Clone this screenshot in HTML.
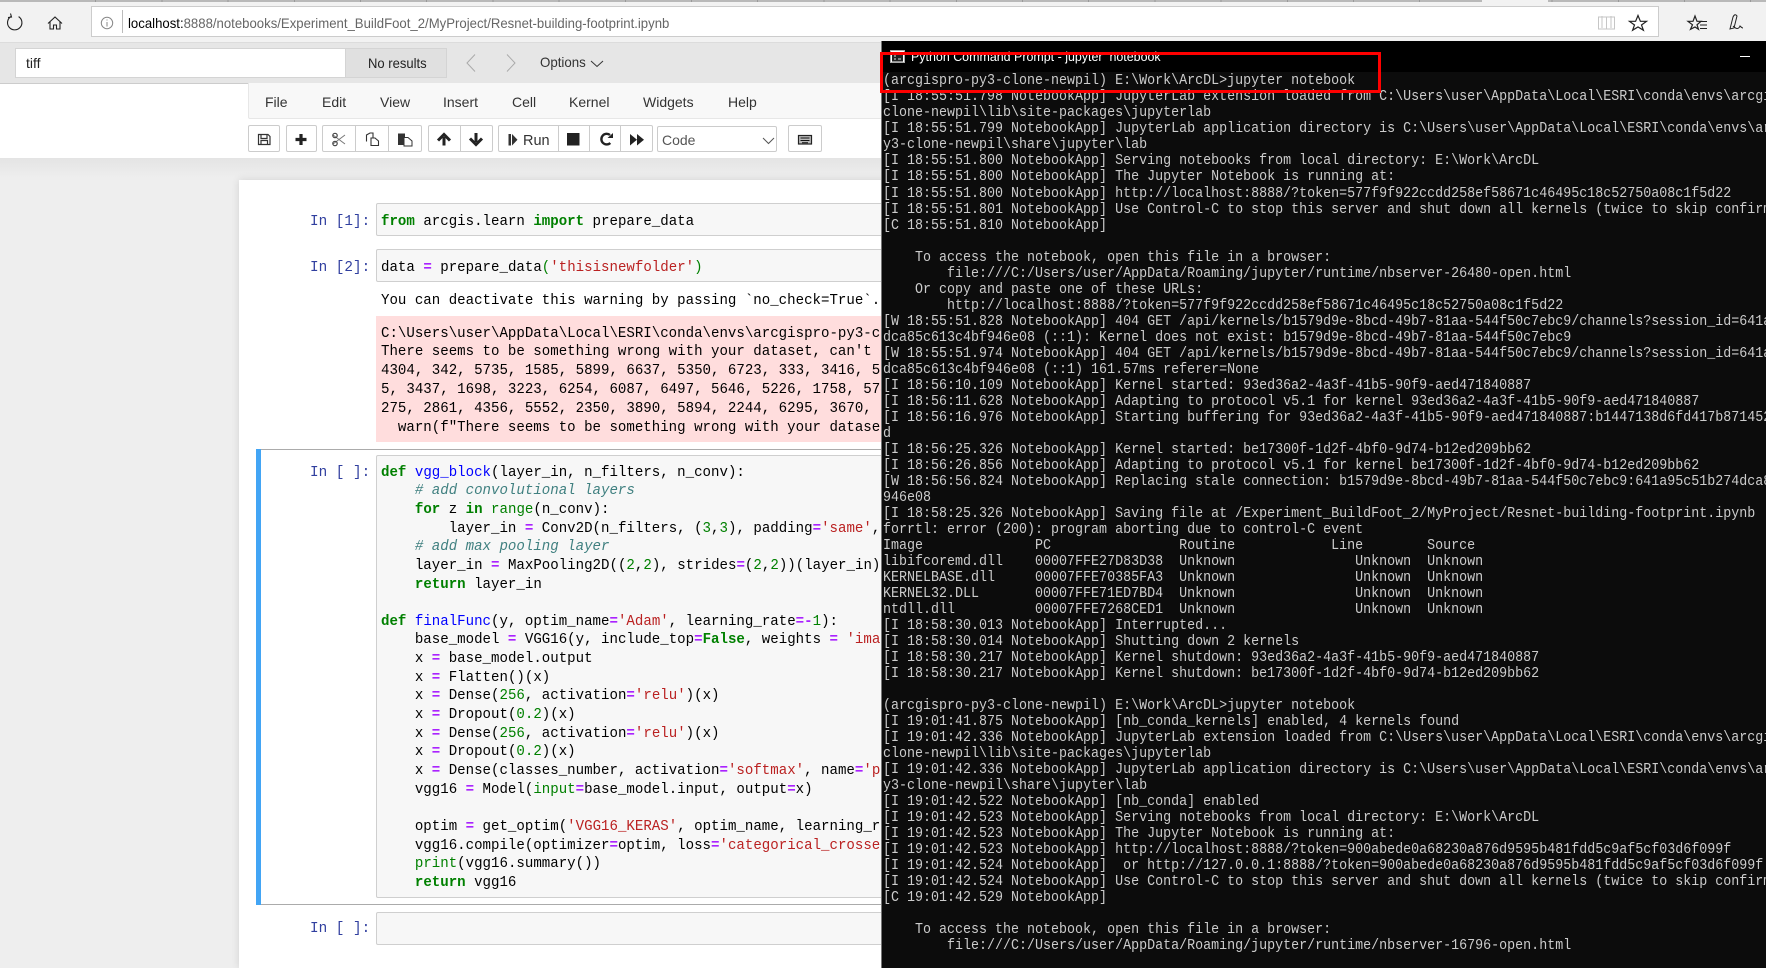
<!DOCTYPE html>
<html><head><meta charset="utf-8"><title>Jupyter</title>
<style>
html,body{margin:0;padding:0;width:1766px;height:968px;overflow:hidden;background:#eee;font-family:"Liberation Sans",sans-serif}
div,svg,span.a{position:absolute}
svg{display:block;overflow:visible}
.m{position:absolute;margin:0;white-space:pre;font:15px/18.64px "Liberation Mono",monospace;transform:scaleX(.94);transform-origin:0 0;color:#000}
.p{color:#303F9F;font:15px/18px "Liberation Mono",monospace;position:absolute;white-space:pre;transform:scaleX(.955);transform-origin:0 0}
.k{color:#008000;font-weight:bold}.f{color:#0000ff}.c{color:#408080;font-style:italic}.o{color:#aa22ff;font-weight:bold}.s{color:#ba2121}.n{color:#008000}
.box{background:#f7f7f7;border:1px solid #cfcfcf;border-radius:2px;left:376px;width:600px;box-sizing:border-box}
.menu{position:absolute;top:93px;font-size:14px;line-height:18px;color:#333}
.b{background:#fff;border:1px solid #ccc;border-radius:2px;top:125px;height:27px;box-sizing:border-box}
.l{background:#ccc;width:1px;top:125px;height:27px}
.t{left:883px;top:73.4px;margin:0;position:absolute;white-space:pre;font:15px/16.02px "Liberation Mono",monospace;color:#ccc;transform:scaleX(.889);transform-origin:0 0}
</style></head><body>

<!-- tab strip -->
<div style="left:0;top:0;width:1766px;height:2px;background:repeating-linear-gradient(90deg,#b9b9b9 0,#b9b9b9 65.2px,#999 65.2px,#999 66.2px);background-position:30px 0"></div>
<div style="left:1482px;top:0;width:66px;height:2px;background:#f2f2f2"></div>
<!-- browser toolbar -->
<div style="left:0;top:2px;width:1766px;height:40px;background:#f2f2f2"></div>
<div style="left:91px;top:6px;width:1568px;height:31px;background:#fff;border:1px solid #ccc;box-sizing:border-box"></div>
<svg style="left:0;top:0" width="130" height="42" fill="none">
<path d="M11 16.5A7.2 7.2 0 1 0 18.6 16.6M10.5 13.5L11.5 17L8 17.5" stroke="#222" stroke-width="1.1"/>
<path d="M48 23.5L55 17L62 23.5M50 22V29H53.5V25H56.5V29H60V22" stroke="#222" stroke-width="1.1"/>
<circle cx="107" cy="23" r="5.7" stroke="#888"/>
<path d="M107 22V26.5M107 19.5V20.5" stroke="#888"/>
<path d="M122.5 10V33" stroke="#bbb"/>
</svg>
<div style="left:128px;top:14px;font-size:14px;line-height:18px;white-space:pre;color:#666;transform:scaleX(.94);transform-origin:0 0"><span style="color:#000">localhost:</span>8888/notebooks/Experiment_BuildFoot_2/MyProject/Resnet-building-footprint.ipynb</div>
<svg style="left:1590px;top:0" width="176" height="42" fill="none">
<path d="M8.5 17H24.5V29H8.5ZM16.5 17V29M12 16V28M21 16V28" stroke="#c6c6c6"/>
<path d="M48 15.500L50.400 21.300H56.500L51.500 25L53.400 30.200L48 27L42.600 30.200L44.500 25L39.500 21.300H45.600Z" stroke="#222" stroke-width="1.2"/>
<path d="M105 16L107 21.300H111L107 24.800L108.500 29.300L105 27L100.500 29.300L102.500 24.800L98 21.300H103Z" stroke="#222" stroke-width="1.2"/>
<path d="M110 21.500H117M110 25H117M110 28.500H117" stroke="#222"/>
<path d="M140 29L143 17Q145 13 147 16L144 28L140 29ZM143 26Q148 31 150 26Q152 28 153 28" stroke="#222"/>
</svg>

<!-- find bar -->
<div style="left:0;top:42px;width:1766px;height:42px;background:#e6e6e6;border-top:1px solid #dcdcdc;border-bottom:1px solid #ccc;box-sizing:border-box"></div>
<div style="left:15px;top:48px;width:331px;height:30px;background:#fff;border:1px solid #d4d4d4;box-sizing:border-box"></div>
<div style="left:26px;top:54px;font-size:14px;line-height:18px;color:#222">tiff</div>
<div style="left:346px;top:48px;width:101px;height:30px;background:#e0e0e0;border:1px solid #d4d4d4;border-left:0;box-sizing:border-box"></div>
<div style="left:368px;top:54px;font-size:14px;line-height:18px;color:#222;white-space:pre;transform:scaleX(.93);transform-origin:0 0">No results</div>
<svg style="left:460px;top:50px" width="160" height="26" fill="none">
<path d="M15 4.500L7 13L15 21.500" stroke="#aaa"/>
<path d="M47 4.500L55 13L47 21.500" stroke="#aaa"/>
<path d="M131 11L137 16.500L143 11" stroke="#333"/>
</svg>
<div style="left:540px;top:53px;font-size:14px;line-height:18px;color:#333;transform:scaleX(.95);transform-origin:0 0">Options</div>

<!-- notebook header -->
<div style="left:0;top:84px;width:1766px;height:74px;background:#fff"></div>
<div style="left:248px;top:83px;width:700px;height:36px;background:#f8f8f8;border:1px solid #e7e7e7;border-top:0;box-sizing:border-box;border-radius:0 0 0 2px"></div>
<span class="menu" style="left:265px">File</span>
<span class="menu" style="left:322px">Edit</span>
<span class="menu" style="left:380px">View</span>
<span class="menu" style="left:443px">Insert</span>
<span class="menu" style="left:512px">Cell</span>
<span class="menu" style="left:569px">Kernel</span>
<span class="menu" style="left:643px">Widgets</span>
<span class="menu" style="left:728px">Help</span>

<!-- toolbar -->
<div class="b" style="left:248px;width:32px"></div>
<div class="b" style="left:286px;width:31px"></div>
<div class="b" style="left:322px;width:100px"></div>
<div class="l" style="left:355px"></div><div class="l" style="left:388px"></div>
<div class="b" style="left:428px;width:65px"></div>
<div class="l" style="left:460px"></div>
<div class="b" style="left:498px;width:155px"></div>
<div class="l" style="left:558px"></div><div class="l" style="left:589px"></div><div class="l" style="left:620px"></div>
<div class="b" style="left:657px;width:120px;top:126px;height:26px"></div>
<div class="b" style="left:788px;width:34px"></div>
<svg style="left:240px;top:120px" width="600" height="40" fill="none">
<path d="M18.500 14.500H28L30 16.500V24.500H18.500ZM21 14.500V18.500H27V14.500M21 24.500V20.500H27.500V24.500" stroke="#333" stroke-width="1.2"/>
<path d="M61 14V25M55.500 19.500H66.500" stroke="#222" stroke-width="3.200"/>
<path d="M93 15L105 24M93 24L105 15" stroke="#777" stroke-width="1"/>
<circle cx="95" cy="15.500" r="2.200" stroke="#444" stroke-width="1.2"/><circle cx="95" cy="23.500" r="2.200" stroke="#444" stroke-width="1.2"/>
<path d="M126.500 21.500V15L130 13H133V18M131 18H135L138.500 21V25.500H131Z" stroke="#333" stroke-width="1.1"/>
<path d="M158 13.500H165V17H167.500V25H158Z" fill="#333"/>
<path d="M164 17.500H168L172 21V26H164Z" fill="#fff" stroke="#333"/>
<path d="M204 25.500V17M198 20.500L204 14.500L210 20.500" stroke="#222" stroke-width="3"/>
<path d="M236 13V22M230 18.500L236 24.500L242 18.500" stroke="#222" stroke-width="3"/>
<path d="M268.500 14H271V25.500H268.500Z" fill="#333"/><path d="M272 14L277.500 19.700L272 25.500Z" fill="#333"/>
<rect x="327" y="13" width="12.500" height="12.500" fill="#222"/>
<path d="M370 15A5.300 5.300 0 1 0 370.300 23" stroke="#222" stroke-width="2.400"/><path d="M367.500 18H373V13Z" fill="#222"/>
<path d="M390 14L397 19.700L390 25.500ZM397 14L404 19.700L397 25.500Z" fill="#222"/>
<path d="M523 18L528.500 23.500L534 18" stroke="#555"/>
<rect x="558.500" y="15.500" width="13" height="8.500" fill="#bbb" stroke="#222" stroke-width="1.2"/>
<path d="M560.500 18H569.500M560.500 20.500H569.500M562 22.800H568" stroke="#111"/>
</svg>
<div style="left:523px;top:131.500px;font-size:14.500px;line-height:18px;color:#333">Run</div>
<div style="left:662px;top:131px;font-size:14px;line-height:18px;color:#555">Code</div>

<!-- main area -->
<div style="left:0;top:158px;width:1766px;height:20px;background:linear-gradient(#e4e4e4,#eee)"></div>
<div style="left:239px;top:180px;width:700px;height:788px;background:#fff;box-shadow:0 0 8px rgba(0,0,0,.12)"></div>

<!-- cell 1 -->
<div class="p" style="left:310px;top:213px">In [1]:</div>
<div class="box" style="top:203px;height:33px"></div>
<pre class="m" style="left:381px;top:213px"><span class="k">from</span> arcgis.learn <span class="k">import</span> prepare_data</pre>

<!-- cell 2 -->
<div class="p" style="left:310px;top:259px">In [2]:</div>
<div class="box" style="top:249px;height:33px"></div>
<pre class="m" style="left:381px;top:259px">data <span class="o">=</span> prepare_data<span class="n">(</span><span class="s">'thisisnewfolder'</span><span class="n">)</span></pre>
<pre class="m" style="left:381px;top:292px">You can deactivate this warning by passing `no_check=True`.</pre>
<div style="left:376px;top:316px;width:600px;height:126px;background:#fdd"></div>
<pre class="m" style="left:381px;top:324.600px;line-height:18.800px">C:\Users\user\AppData\Local\ESRI\conda\envs\arcgispro-py3-clone-newpil
There seems to be something wrong with your dataset, can't read
4304, 342, 5735, 1585, 5899, 6637, 5350, 6723, 333, 3416, 5126
5, 3437, 1698, 3223, 6254, 6087, 6497, 5646, 5226, 1758, 5741
275, 2861, 4356, 5552, 2350, 3890, 5894, 2244, 6295, 3670, 126
  warn(f"There seems to be something wrong with your dataset</pre>

<!-- selected cell -->
<div style="left:256px;top:449px;width:700px;height:456px;border-top:1px solid #ababab;border-bottom:1px solid #ababab;box-sizing:border-box"></div>
<div style="left:256px;top:449px;width:5px;height:456px;background:#42a5f5"></div>
<div class="p" style="left:310px;top:464px">In [ ]:</div>
<div class="box" style="top:455px;height:443px"></div>
<pre class="m" style="left:381px;top:463.700px"><span class="k">def</span> <span class="f">vgg_block</span>(layer_in, n_filters, n_conv):
    <span class="c"># add convolutional layers</span>
    <span class="k">for</span> z <span class="k">in</span> <span class="n">range</span>(n_conv):
        layer_in <span class="o">=</span> Conv2D(n_filters, (<span class="n">3</span>,<span class="n">3</span>), padding<span class="o">=</span><span class="s">'same'</span>, activation<span class="o">=</span><span class="s">'relu'</span>)
    <span class="c"># add max pooling layer</span>
    layer_in <span class="o">=</span> MaxPooling2D((<span class="n">2</span>,<span class="n">2</span>), strides<span class="o">=</span>(<span class="n">2</span>,<span class="n">2</span>))(layer_in)
    <span class="k">return</span> layer_in

<span class="k">def</span> <span class="f">finalFunc</span>(y, optim_name<span class="o">=</span><span class="s">'Adam'</span>, learning_rate<span class="o">=-</span><span class="n">1</span>):
    base_model <span class="o">=</span> VGG16(y, include_top<span class="o">=</span><span class="k">False</span>, weights <span class="o">=</span> <span class="s">'imagenet'</span>)
    x <span class="o">=</span> base_model.output
    x <span class="o">=</span> Flatten()(x)
    x <span class="o">=</span> Dense(<span class="n">256</span>, activation<span class="o">=</span><span class="s">'relu'</span>)(x)
    x <span class="o">=</span> Dropout(<span class="n">0.2</span>)(x)
    x <span class="o">=</span> Dense(<span class="n">256</span>, activation<span class="o">=</span><span class="s">'relu'</span>)(x)
    x <span class="o">=</span> Dropout(<span class="n">0.2</span>)(x)
    x <span class="o">=</span> Dense(classes_number, activation<span class="o">=</span><span class="s">'softmax'</span>, name<span class="o">=</span><span class="s">'predictions'</span>)(x)
    vgg16 <span class="o">=</span> Model(<span class="n">input</span><span class="o">=</span>base_model.input, output<span class="o">=</span>x)

    optim <span class="o">=</span> get_optim(<span class="s">'VGG16_KERAS'</span>, optim_name, learning_rate)
    vgg16.compile(optimizer<span class="o">=</span>optim, loss<span class="o">=</span><span class="s">'categorical_crossentropy'</span>)
    <span class="n">print</span>(vgg16.summary())
    <span class="k">return</span> vgg16</pre>

<!-- empty cell -->
<div class="p" style="left:310px;top:920px">In [ ]:</div>
<div class="box" style="top:912px;height:33px"></div>

<!-- terminal -->
<div style="left:881px;top:41px;width:885px;height:927px;background:#0c0c0c;border-left:1px solid #777;box-sizing:border-box"></div>
<div style="left:882px;top:41px;width:884px;height:31px;background:#000"></div>
<svg style="left:890px;top:50px" width="16" height="14" fill="none"><rect x=".5" y=".5" width="14" height="12" fill="#fff" stroke="#aaa"/><rect x="2" y="3" width="11" height="8.500" fill="#222"/><path d="M4 6H6M4 9H6M8 9H11" stroke="#ddd"/></svg>
<div style="left:911px;top:48px;font-size:13px;line-height:18px;color:#fff;white-space:pre;transform:scaleX(.957);transform-origin:0 0">Python Command Prompt - jupyter  notebook</div>
<div style="left:1740px;top:56px;width:10px;height:1px;background:#fff"></div>
<pre class="t">(arcgispro-py3-clone-newpil) E:\Work\ArcDL&gt;jupyter notebook
[I 18:55:51.798 NotebookApp] JupyterLab extension loaded from C:\Users\user\AppData\Local\ESRI\conda\envs\arcgispro-py3-
clone-newpil\lib\site-packages\jupyterlab
[I 18:55:51.799 NotebookApp] JupyterLab application directory is C:\Users\user\AppData\Local\ESRI\conda\envs\arcgispro-p
y3-clone-newpil\share\jupyter\lab
[I 18:55:51.800 NotebookApp] Serving notebooks from local directory: E:\Work\ArcDL
[I 18:55:51.800 NotebookApp] The Jupyter Notebook is running at:
[I 18:55:51.800 NotebookApp] http://localhost:8888/?token=577f9f922ccdd258ef58671c46495c18c52750a08c1f5d22
[I 18:55:51.801 NotebookApp] Use Control-C to stop this server and shut down all kernels (twice to skip confirmation).
[C 18:55:51.810 NotebookApp]

    To access the notebook, open this file in a browser:
        file:///C:/Users/user/AppData/Roaming/jupyter/runtime/nbserver-26480-open.html
    Or copy and paste one of these URLs:
        http://localhost:8888/?token=577f9f922ccdd258ef58671c46495c18c52750a08c1f5d22
[W 18:55:51.828 NotebookApp] 404 GET /api/kernels/b1579d9e-8bcd-49b7-81aa-544f50c7ebc9/channels?session_id=641a95c51b274
dca85c613c4bf946e08 (::1): Kernel does not exist: b1579d9e-8bcd-49b7-81aa-544f50c7ebc9
[W 18:55:51.974 NotebookApp] 404 GET /api/kernels/b1579d9e-8bcd-49b7-81aa-544f50c7ebc9/channels?session_id=641a95c51b274
dca85c613c4bf946e08 (::1) 161.57ms referer=None
[I 18:56:10.109 NotebookApp] Kernel started: 93ed36a2-4a3f-41b5-90f9-aed471840887
[I 18:56:11.628 NotebookApp] Adapting to protocol v5.1 for kernel 93ed36a2-4a3f-41b5-90f9-aed471840887
[I 18:56:16.976 NotebookApp] Starting buffering for 93ed36a2-4a3f-41b5-90f9-aed471840887:b1447138d6fd417b87145216
d
[I 18:56:25.326 NotebookApp] Kernel started: be17300f-1d2f-4bf0-9d74-b12ed209bb62
[I 18:56:26.856 NotebookApp] Adapting to protocol v5.1 for kernel be17300f-1d2f-4bf0-9d74-b12ed209bb62
[W 18:56:56.824 NotebookApp] Replacing stale connection: b1579d9e-8bcd-49b7-81aa-544f50c7ebc9:641a95c51b274dca85c613c4bf
946e08
[I 18:58:25.326 NotebookApp] Saving file at /Experiment_BuildFoot_2/MyProject/Resnet-building-footprint.ipynb
forrtl: error (200): program aborting due to control-C event
Image              PC                Routine            Line        Source
libifcoremd.dll    00007FFE27D83D38  Unknown               Unknown  Unknown
KERNELBASE.dll     00007FFE70385FA3  Unknown               Unknown  Unknown
KERNEL32.DLL       00007FFE71ED7BD4  Unknown               Unknown  Unknown
ntdll.dll          00007FFE7268CED1  Unknown               Unknown  Unknown
[I 18:58:30.013 NotebookApp] Interrupted...
[I 18:58:30.014 NotebookApp] Shutting down 2 kernels
[I 18:58:30.217 NotebookApp] Kernel shutdown: 93ed36a2-4a3f-41b5-90f9-aed471840887
[I 18:58:30.217 NotebookApp] Kernel shutdown: be17300f-1d2f-4bf0-9d74-b12ed209bb62

(arcgispro-py3-clone-newpil) E:\Work\ArcDL&gt;jupyter notebook
[I 19:01:41.875 NotebookApp] [nb_conda_kernels] enabled, 4 kernels found
[I 19:01:42.336 NotebookApp] JupyterLab extension loaded from C:\Users\user\AppData\Local\ESRI\conda\envs\arcgispro-py3-
clone-newpil\lib\site-packages\jupyterlab
[I 19:01:42.336 NotebookApp] JupyterLab application directory is C:\Users\user\AppData\Local\ESRI\conda\envs\arcgispro-p
y3-clone-newpil\share\jupyter\lab
[I 19:01:42.522 NotebookApp] [nb_conda] enabled
[I 19:01:42.523 NotebookApp] Serving notebooks from local directory: E:\Work\ArcDL
[I 19:01:42.523 NotebookApp] The Jupyter Notebook is running at:
[I 19:01:42.523 NotebookApp] http://localhost:8888/?token=900abede0a68230a876d9595b481fdd5c9af5cf03d6f099f
[I 19:01:42.524 NotebookApp]  or http://127.0.0.1:8888/?token=900abede0a68230a876d9595b481fdd5c9af5cf03d6f099f
[I 19:01:42.524 NotebookApp] Use Control-C to stop this server and shut down all kernels (twice to skip confirmation).
[C 19:01:42.529 NotebookApp]

    To access the notebook, open this file in a browser:
        file:///C:/Users/user/AppData/Roaming/jupyter/runtime/nbserver-16796-open.html</pre>

<!-- red annotation -->
<div style="left:880px;top:52px;width:501px;height:41px;border:3px solid #f00;box-sizing:border-box"></div>
</body></html>
